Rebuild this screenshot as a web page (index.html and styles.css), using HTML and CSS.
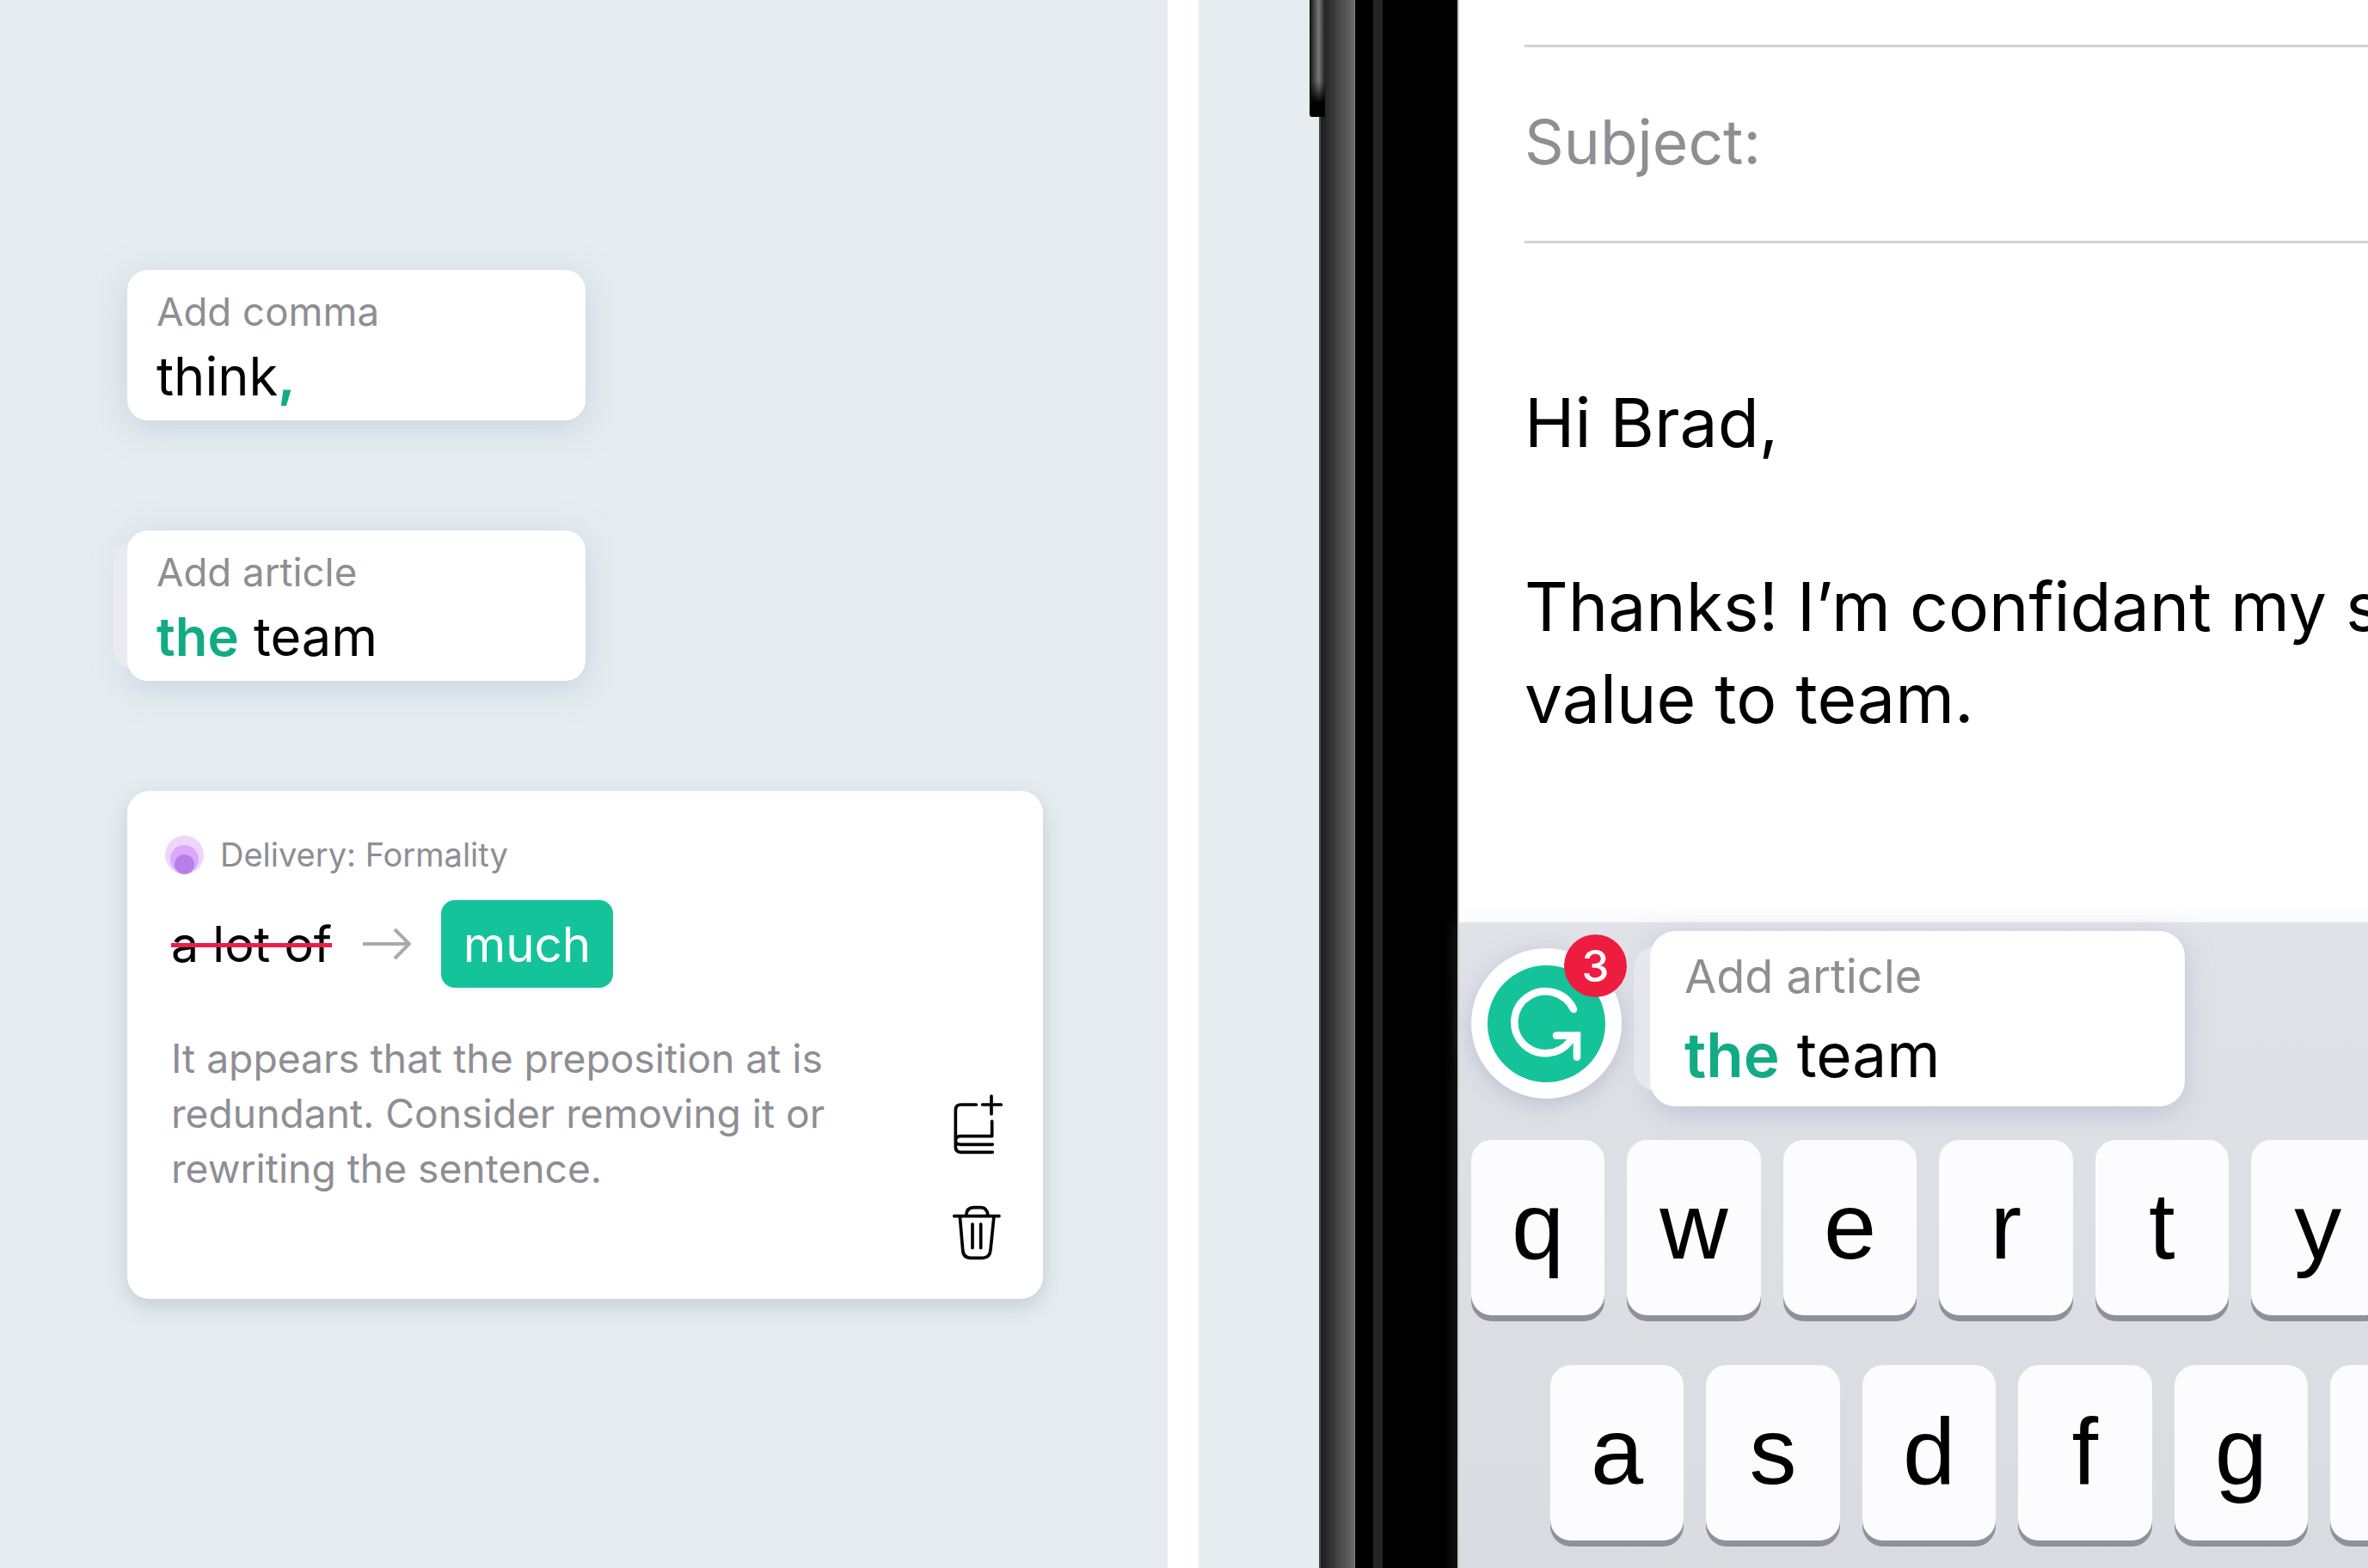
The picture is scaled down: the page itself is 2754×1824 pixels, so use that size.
FILE: index.html
```html
<!DOCTYPE html>
<html lang="en">
<head>
  <meta charset="UTF-8">
  <title>Grammar suggestions</title>
  <link rel="stylesheet" href="styles.css">
</head>
<body>
  <div class="page">
    <section class="cards-panel">
      <div class="mini-card">
        <div class="card-label">Add comma</div>
        <div class="card-text">think<span class="green-mark">,</span></div>
      </div>

      <div class="mini-card stacked">
        <div class="card-label">Add article</div>
        <div class="card-text"><span class="green-word">the</span> team</div>
      </div>

      <div class="detail-card">
        <div class="detail-main">
          <div class="detail-head">
            <span class="dot"><span class="dot-mid"></span><span class="dot-inner"></span></span>
            <span>Delivery: Formality</span>
          </div>
          <div class="replace-row">
            <span class="old-word">a lot of</span>
            <svg class="arrow" viewBox="0 0 56 38"><path d="M0 19H54M37 2L54 19L37 36"/></svg>
            <span class="new-word">much</span>
          </div>
          <p class="detail-note">It appears that the preposition at is redundant. Consider removing it or rewriting the sentence.</p>
        </div>
        <div class="detail-actions">
          <svg class="action-icon" viewBox="80 60 180 220"><path d="M165 102H112Q93 102 93 121V250Q93 268 111 268H222M220 160V212H111Q93 212 93 228Q93 241 111 241H222M187 102H252M218 72V135"/></svg>
          <svg class="action-icon" viewBox="80 450 180 200"><path d="M88 494H245M130 492Q132 464 155 464H182Q203 464 206 492M108 494L118 612Q120 640 146 640H188Q213 640 215 612L227 494M152 522V605M181 522V605"/></svg>
        </div>
      </div>
    </section>

    <section class="phone-panel">
      <div class="phone-button"></div>
      <div class="phone-edge"></div>
      <div class="phone-bezel"><div class="bezel-strip"></div></div>
      <div class="screen">
        <div class="email">
          <div class="field field-to"></div>
          <div class="field field-subject">Subject:</div>
          <div class="email-body">
            <p>Hi Brad,</p>
            <p>Thanks! I’m confidant my skills will add<br>value to team.</p>
          </div>
        </div>
        <div class="keyboard">
          <div class="suggest-row">
            <div class="logo">
              <svg class="logo-g" viewBox="0 0 137 136"><path d="M100 51A36 36 0 1 0 96 88L104 81.6M80 81.6H104V106.7"/></svg>
              <span class="badge">3</span>
            </div>
            <div class="suggest-card">
              <div class="suggest-label">Add article</div>
              <div class="suggest-text"><span class="green-word">the</span> team</div>
            </div>
          </div>
          <div class="key-row">
            <div class="key">q</div><div class="key">w</div><div class="key">e</div><div class="key">r</div><div class="key">t</div><div class="key">y</div>
          </div>
          <div class="key-row row-two">
            <div class="key">a</div><div class="key">s</div><div class="key">d</div><div class="key">f</div><div class="key">g</div><div class="key">h</div>
          </div>
        </div>
      </div>
    </section>
  </div>
</body>
</html>
```

FILE: styles.css
```css
html, body {
  margin: 0;
  background: white;
}
.page {
  display: flex;
  width: 2754px;
  height: 1824px;
  overflow: hidden;
  font-family: Inter, "Liberation Sans", sans-serif;
  color: #000;
}

/* left panel */
.cards-panel {
  width: 1358px;
  flex-shrink: 0;
  margin-right: 36px;
  padding: 314px 0 0 148px;
  box-sizing: border-box;
  background: #e5edf0;
  display: flex;
  flex-direction: column;
  align-items: flex-start;
  gap: 128px;
  isolation: isolate;
}
.mini-card {
  position: relative;
  width: 533px;
  height: 175px;
  padding: 22px 0 0 34px;
  box-sizing: border-box;
  background: white;
  border-radius: 24px;
}
/* shadow sits under the peeking back card */
.mini-card::after, .suggest-card::after {
  content: "";
  position: absolute;
  inset: 0;
  border-radius: inherit;
  z-index: -2;
}
.mini-card::after {
  box-shadow: 0 8px 36px rgba(170, 185, 210, 0.5);
}
.mini-card.stacked::before {
  content: "";
  position: absolute;
  left: -17px;
  top: 13px;
  width: 60px;
  height: 148px;
  background: #e9ebf1;
  border-radius: 24px;
  z-index: -1;
}
.card-label {
  font-size: 45.6px;
  line-height: 54px;
  color: #8e8e93;
}
.card-text {
  font-size: 61.4px;
  line-height: 76px;
  margin-top: 10px;
}
.green-word {
  color: #11ab85;
  font-weight: 600;
}
.green-mark {
  color: #11ab85;
  font-weight: 700;
}

.detail-card {
  width: 1065px;
  height: 591px;
  padding: 49px 46px 0 44px;
  box-sizing: border-box;
  background: white;
  border-radius: 26px;
  box-shadow: 0 8px 24px rgba(120, 135, 150, 0.32);
  display: flex;
  justify-content: space-between;
}
.detail-head {
  display: flex;
  align-items: center;
  gap: 19px;
  font-size: 38px;
  line-height: 50px;
  color: #8e8e93;
}
.dot {
  position: relative;
  width: 45px;
  height: 45px;
  border-radius: 50%;
  background: #eed6fb;
  overflow: hidden;
}
.dot-mid, .dot-inner {
  position: absolute;
  border-radius: 50%;
}
.dot-mid {
  left: 6px;
  top: 11px;
  width: 33px;
  height: 33px;
  background: #dba9f7;
}
.dot-inner {
  left: 11px;
  top: 22px;
  width: 23px;
  height: 23px;
  background: #b97fe9;
}
.replace-row {
  display: flex;
  align-items: center;
  margin: 28px 0 0 7px;
}
.old-word {
  position: relative;
  font-size: 57.3px;
  line-height: 66px;
}
.old-word::after {
  content: "";
  position: absolute;
  left: 0;
  right: 0;
  top: 32px;
  height: 5px;
  background: #ee1c47;
}
.arrow {
  width: 56px;
  height: 38px;
  margin: 0 35px 0 36px;
  fill: none;
  stroke: #aaa;
  stroke-width: 4;
}
.new-word {
  width: 200px;
  height: 102px;
  background: #15c39a;
  border-radius: 16px;
  color: white;
  font-size: 56.5px;
  display: flex;
  align-items: center;
  justify-content: center;
}
.detail-note {
  width: 790px;
  margin: 50px 0 0 7px;
  font-size: 46.2px;
  line-height: 64px;
  color: #8e8e93;
}
.detail-actions {
  display: flex;
  flex-direction: column;
  align-items: center;
  gap: 56px;
  padding-top: 302px;
}
.action-icon {
  width: 60px;
  height: auto;
  fill: none;
  stroke: #000;
  stroke-width: 11;
  stroke-linecap: round;
  stroke-linejoin: round;
}

/* phone */
.phone-panel {
  position: relative;
  flex: 1;
  display: flex;
  padding-left: 140px;
  background: #e5edf0;
}
.phone-button {
  position: absolute;
  left: 129px;
  top: 0;
  width: 18px;
  height: 136px;
  background: linear-gradient(to bottom, transparent 70%, #000 88%), linear-gradient(to right, #111, #777 60%, #222);
  border-bottom-left-radius: 3px;
}
.phone-edge {
  width: 42px;
  flex-shrink: 0;
  box-sizing: border-box;
  border-left: 2px solid #474d50;
  border-right: 1px solid #8a8a8a;
  background: linear-gradient(to right, #1c1c1c, #333 30%, #6a6a6a);
}
.phone-bezel {
  width: 121px;
  flex-shrink: 0;
  box-sizing: border-box;
  padding-left: 21px;
  background: #000;
  border-right: 2px solid #c9c9cc;
}
.bezel-strip {
  width: 11px;
  height: 100%;
  background: #252525;
}
.screen {
  flex: 1;
  min-width: 0;
  background: white;
  display: flex;
  flex-direction: column;
}
.email {
  height: 1073px;
  flex-shrink: 0;
  padding-left: 76px;
  box-sizing: border-box;
  overflow: hidden;
}
.field {
  border-bottom: 3px solid #d1d1d5;
  box-sizing: border-box;
}
.field-to {
  height: 55px;
}
.field-subject {
  height: 228px;
  padding-top: 65px;
  font-size: 71.3px;
  line-height: 90px;
  color: #8e8e93;
}
.email-body {
  width: 1200px;
  margin-top: 155px;
  font-size: 78.6px;
  line-height: 107px;
}
.email-body p {
  margin: 0 0 107px;
  white-space: nowrap;
}

/* keyboard */
.keyboard {
  flex: 1;
  padding: 10px 0 0 14px;
  background: linear-gradient(to bottom, #e0e2e8, #d9dbe0);
  box-shadow: 0 -4px 20px rgba(200, 205, 215, 0.2);
}
.suggest-row {
  position: relative;
  z-index: 1;
  display: flex;
  align-items: flex-start;
  height: 243px;
}
.logo {
  position: relative;
  width: 175px;
  height: 175px;
  margin-top: 20px;
  background: white;
  border-radius: 50%;
  box-shadow: 0 6px 26px rgba(160, 168, 190, 0.55);
  display: flex;
  align-items: center;
  justify-content: center;
  flex-shrink: 0;
}
.logo-g {
  width: 137px;
  height: 136px;
  background: #15c39a;
  border-radius: 50%;
  fill: none;
  stroke: white;
  stroke-width: 8.6;
  stroke-linecap: round;
}
.badge {
  position: absolute;
  left: 108px;
  top: -16px;
  width: 73px;
  height: 73px;
  background: #ee1c3f;
  border-radius: 50%;
  color: white;
  font-size: 51px;
  font-weight: 500;
  display: flex;
  align-items: center;
  justify-content: center;
}
.suggest-card {
  position: relative;
  width: 622px;
  height: 204px;
  margin-left: 33px;
  padding: 22px 0 0 40px;
  box-sizing: border-box;
  background: white;
  border-radius: 30px;
}
.suggest-card::after {
  box-shadow: 0 8px 30px rgba(170, 175, 198, 0.55);
}
.suggest-card::before {
  content: "";
  position: absolute;
  left: -19px;
  top: 17px;
  width: 60px;
  height: 170px;
  background: #e6e8ee;
  border-radius: 28px;
  z-index: -1;
}
.suggest-label {
  font-size: 54px;
  line-height: 62px;
  color: #8e8e93;
}
.suggest-text {
  font-size: 71px;
  line-height: 84px;
  margin-top: 18px;
}
.key-row {
  display: flex;
  gap: 26px;
  margin-bottom: 58px;
}
.row-two {
  margin-left: 92px;
}
.key {
  width: 155.4px;
  height: 204px;
  flex-shrink: 0;
  background: #fcfcfe;
  border-radius: 24px;
  box-shadow: 0 7px 0 #8f909c;
  font-family: "Liberation Sans", Arial, sans-serif;
  font-size: 110px;
  line-height: 200px;
  text-align: center;
}
```
